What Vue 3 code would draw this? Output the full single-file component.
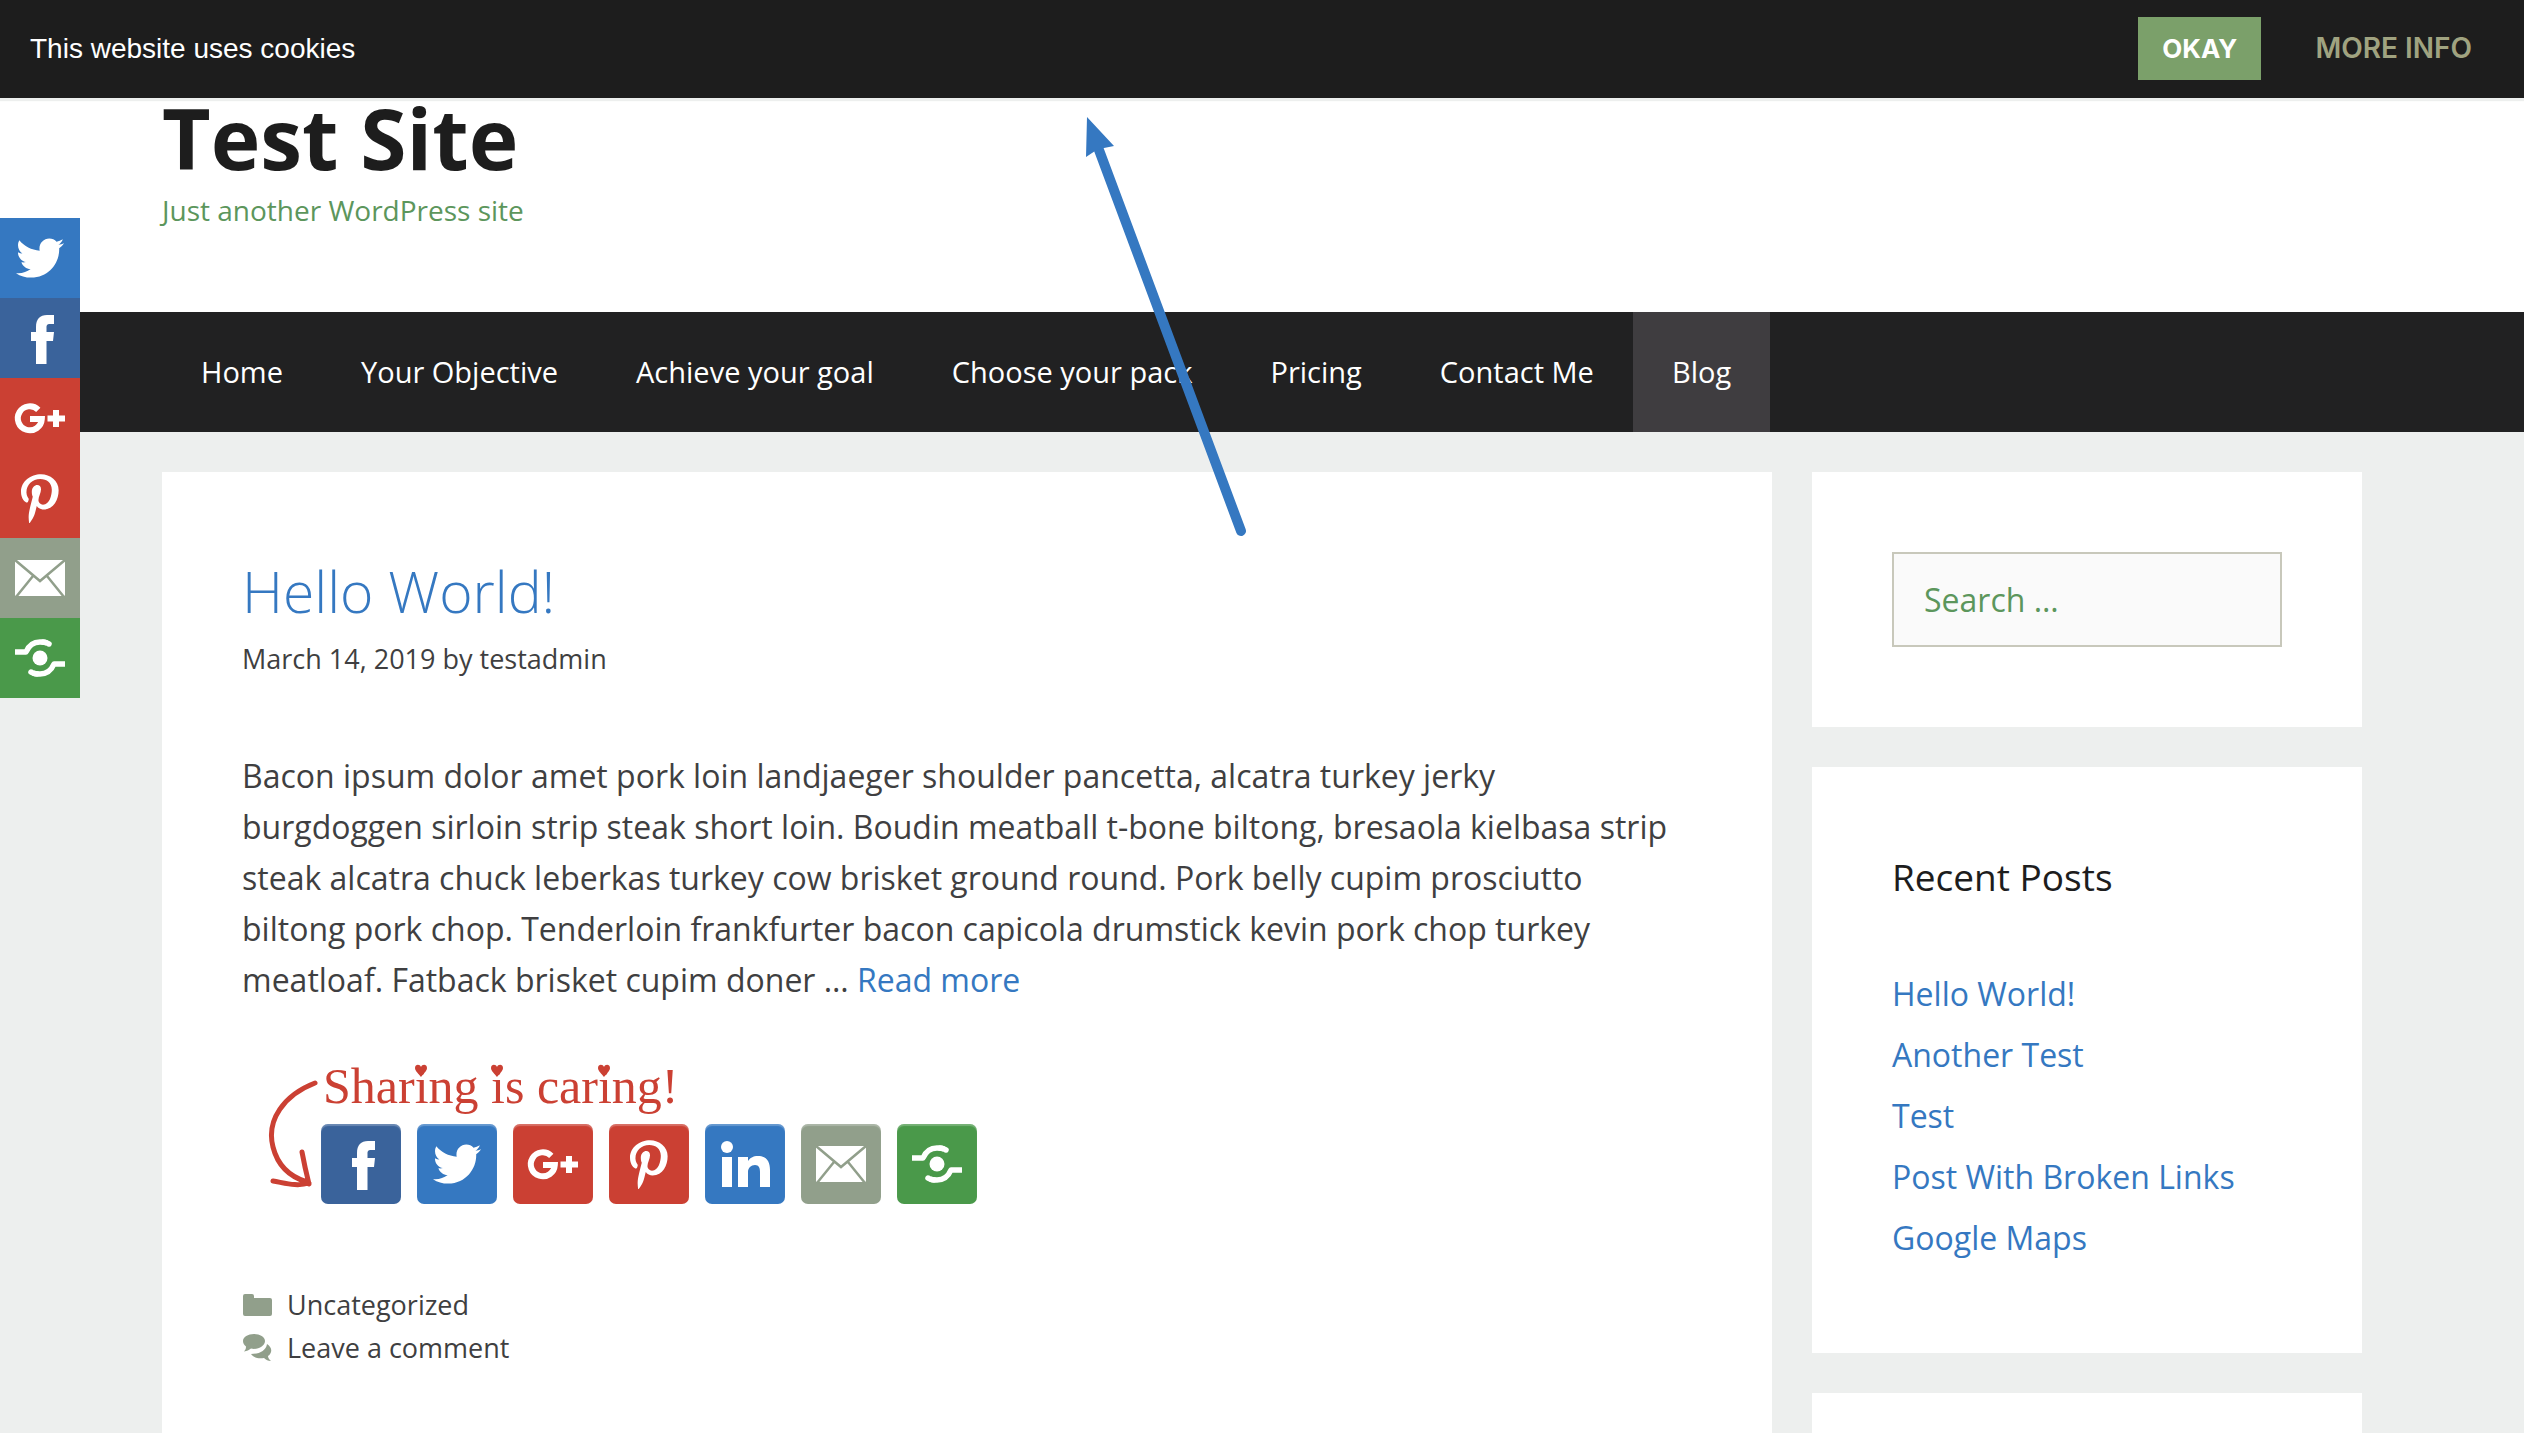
<script setup>
const nav = [
  'Home',
  'Your Objective',
  'Achieve your goal',
  'Choose your pack',
  'Pricing',
  'Contact Me',
  'Blog',
]
const floating = ['twitter', 'facebook', 'google', 'pinterest', 'email', 'share']
const inline = ['facebook', 'twitter', 'google', 'pinterest', 'linkedin', 'email', 'share']
const recent = ['Hello World!', 'Another Test', 'Test', 'Post With Broken Links', 'Google Maps']
</script>

<template>
  <div class="page">
    <svg class="sprite" aria-hidden="true">
      <symbol id="i-twitter" viewBox="0 0 80 80">
        <path
          transform="translate(16 16) scale(.094)"
          d="M459.37 151.716c.325 4.548.325 9.097.325 13.645 0 138.72-105.583 298.558-298.558 298.558-59.452 0-114.68-17.219-161.137-47.106 8.447.974 16.568 1.299 25.34 1.299 49.055 0 94.213-16.568 130.274-44.832-46.132-.975-84.792-31.188-98.112-72.772 6.498.974 12.995 1.624 19.818 1.624 9.421 0 18.843-1.3 27.614-3.573-48.081-9.747-84.143-51.98-84.143-102.985v-1.299c13.969 7.797 30.214 12.67 47.431 13.319-28.264-18.843-46.781-51.005-46.781-87.391 0-19.492 5.197-37.36 14.294-52.954 51.655 63.675 129.3 105.258 216.365 109.807-1.624-7.797-2.599-15.918-2.599-24.04 0-57.828 46.782-104.934 104.934-104.934 30.213 0 57.502 12.67 76.67 33.137 23.715-4.548 46.456-13.32 66.599-25.34-7.798 24.366-24.366 44.833-46.132 57.827 21.117-2.273 41.584-8.122 60.426-16.243-14.292 20.791-32.161 39.308-52.628 54.253z"
        />
      </symbol>
      <symbol id="i-facebook" viewBox="0 0 80 80">
        <path d="M36 66V43h-5v-9h5v-5c0-8 4-12 11-12h7v9h-4c-3 0-3.500 1-3.500 4v4H54l-1 9h-6.500v23z" />
      </symbol>
      <symbol id="i-google" viewBox="0 0 80 80">
        <path
          d="M38.300 31.800A12 12 0 1 0 41.800 41H30M56 32v17M47.500 40.500H65"
          fill="none"
          stroke="currentColor"
          stroke-width="6"
        />
      </symbol>
      <symbol id="i-pinterest" viewBox="0 0 80 80">
        <path
          transform="translate(21 15.500) scale(.098)"
          d="M204 6.500C101.400 6.500 0 74.900 0 185.600 0 256 39.600 296 63.600 296c9.900 0 15.600-27.600 15.600-35.400 0-9.300-23.700-29.100-23.700-67.800 0-80.400 61.200-137.400 140.400-137.400 68.100 0 118.500 38.700 118.500 109.800 0 53.100-21.300 152.700-90.300 152.700-24.900 0-46.200-18-46.200-43.800 0-37.800 26.400-74.400 26.400-113.400 0-66.200-93.900-54.200-93.900 25.800 0 16.800 2.100 35.400 9.600 50.700-13.800 59.400-42 147.900-42 209.100 0 18.900 2.700 37.500 4.500 56.400 3.400 3.800 1.700 3.400 6.900 1.500 50.400-69 48.600-82.500 71.400-172.800 12.300 23.400 44.100 36 69.300 36 106.200 0 153.900-103.500 153.900-196.800C384 71.300 298.200 6.500 204 6.500z"
        />
      </symbol>
      <symbol id="i-linkedin" viewBox="0 0 80 80">
        <circle cx="22" cy="23" r="6" />
        <path d="M17 33h10v30H17zM33 33h10v4c2-3 5-5 10-5 9 0 12 6 12 14v17H55V48c0-4-1-7-5-7s-7 3-7 7v15H33z" />
      </symbol>
      <symbol id="i-email" viewBox="0 0 80 80">
        <rect x="15" y="22" width="50" height="36" rx="1" />
        <path
          d="M15 22l25 21 25-21M16 59l17-21M64 59L47 38"
          fill="none"
          stroke="#919f8b"
          stroke-width="2.500"
        />
      </symbol>
      <symbol id="i-share" viewBox="0 0 80 80">
        <circle cx="40" cy="40" r="7.500" />
        <g fill="none" stroke="currentColor" stroke-width="5.500" stroke-linejoin="round">
          <path d="M15 34h11c3-7 8-10 14-10 3 0 5 0 7 1" />
          <path d="M65 46H54c-3 7-8 10-14 10-3 0-5 0-7-1" />
          <path d="M43 24c3 0 4 1 6 2M37 56c-3 0-4-1-6-2" stroke-linecap="round" />
        </g>
      </symbol>
    </svg>

    <div class="cookie" role="region" aria-label="Cookie notice">
      <span>This website uses cookies</span>
      <div class="cookie-actions">
        <button type="button" class="okay">Okay</button>
        <a href="#" class="more-info">More info</a>
      </div>
    </div>

    <header class="site-header">
      <div class="container">
        <h1>Test Site</h1>
        <p>Just another WordPress site</p>
      </div>
    </header>

    <nav class="main-nav">
      <ul class="container">
        <li v-for="item in nav" :key="item">
          <a href="#" :class="{ current: item === 'Blog' }">{{ item }}</a>
        </li>
      </ul>
    </nav>

    <div class="container content">
      <main class="post">
        <h2><a href="#">Hello World!</a></h2>
        <p class="meta">March 14, 2019 by <a href="#">testadmin</a></p>
        <p class="excerpt">
          Bacon ipsum dolor amet pork loin landjaeger shoulder pancetta, alcatra turkey jerky<br />
          burgdoggen sirloin strip steak short loin. Boudin meatball t-bone biltong, bresaola
          kielbasa strip steak alcatra chuck leberkas turkey cow brisket ground round. Pork belly
          cupim prosciutto<br />
          biltong pork chop. Tenderloin frankfurter bacon capicola drumstick kevin pork chop turkey
          meatloaf. Fatback brisket cupim doner … <a href="#">Read more</a>
        </p>
        <section class="sharing">
          <svg class="swoosh" viewBox="0 0 54 120" aria-hidden="true">
            <path d="M51 13C20 25 2 50 9 77c4 16 14 29 34 35M38 82c2 11 4 20 7 32M9 111c12 2 24 6 36 2" />
          </svg>
          <p class="caring">
            Sharing is caring!
            <svg class="hearts" viewBox="0 0 360 56" aria-hidden="true">
              <path
                v-for="x in [98, 174, 281]"
                :key="x"
                :transform="`translate(${x} 8)`"
                d="M0 11C-2 8-6 5-6 2c0-4 5-4 6-1 1-3 6-3 6 1 0 3-4 6-6 9z"
              />
            </svg>
          </p>
          <div class="share-row">
            <a v-for="name in inline" :key="name" href="#" :class="['tile', name]" :aria-label="name">
              <svg><use :href="'#i-' + name" /></svg>
            </a>
          </div>
        </section>
        <footer class="post-footer">
          <div>
            <svg viewBox="0 0 30 30" aria-hidden="true">
              <path d="M1 6q0-2 2-2h7q2 0 2 2v2h16q2 0 2 2v14q0 2-2 2H3q-2 0-2-2z" />
            </svg>
            <a href="#">Uncategorized</a>
          </div>
          <div>
            <svg viewBox="0 0 30 30" aria-hidden="true">
              <path d="M12 1c6 0 11 3 11 7s-5 8-11 8l-3-.500c-2 1.500-4 2.500-7 3 1.500-1.500 2-3 2-5C2 12 1 10 1 8c0-4 5-7 11-7z" />
              <path d="M25 11c6 4 5 9 1 12 0 2 1 3 3 5-3 0-5-1-7-3-5 1-10 0-13-4 8 0 15-3 16-10z" />
            </svg>
            <a href="#">Leave a comment</a>
          </div>
        </footer>
      </main>

      <aside class="sidebar">
        <form class="widget" @submit.prevent>
          <input type="search" placeholder="Search …" aria-label="Search for:" />
        </form>
        <section class="widget">
          <h3>Recent Posts</h3>
          <ul>
            <li v-for="title in recent" :key="title"><a href="#">{{ title }}</a></li>
          </ul>
        </section>
        <section class="widget"></section>
      </aside>
    </div>

    <div class="floating">
      <a v-for="name in floating" :key="name" href="#" :class="['tile', name]" :aria-label="name">
        <svg><use :href="'#i-' + name" /></svg>
      </a>
    </div>

    <svg class="pointer" viewBox="0 0 170 430" aria-hidden="true">
      <path d="M19 40L161 421" stroke="#3578c1" stroke-width="10" stroke-linecap="round" />
      <path d="M7 7L34 36 24 38 15 41 6 47z" fill="#3578c1" />
    </svg>
  </div>
</template>

<style>
body {
  margin: 0;
}
</style>

<style scoped>
.page {
  position: relative;
  height: 100vh;
  overflow: hidden;
  background: #edefee;
  color: #3f3f41;
  font-family: "Open Sans", "Noto Sans", sans-serif;
  font-size: 32px;
  line-height: 51px;
}
h1, h2, h3, p, ul {
  margin: 0;
  padding: 0;
}
ul {
  list-style: none;
}
a {
  color: #3578c1;
  text-decoration: none;
}
.sprite {
  position: absolute;
  width: 0;
  height: 0;
}
.container {
  box-sizing: border-box;
  max-width: 2200px;
  margin: 0 auto;
}

.cookie {
  position: absolute;
  z-index: 2;
  top: 0;
  left: 0;
  right: 0;
  display: flex;
  align-items: center;
  justify-content: space-between;
  height: 98px;
  padding: 0 28px 2px 30px;
  box-sizing: border-box;
  background: #1d1d1d;
  box-shadow: 0 3px 1px #edefee;
  color: #fff;
  font-family: "Liberation Sans", Arial, sans-serif;
  font-size: 28px;
}
.cookie-actions {
  display: flex;
  gap: 30px;
}
.okay,
.more-info {
  padding: 0 24px;
  border: 0;
  font: 600 28px/63px Inter, sans-serif;
  text-transform: uppercase;
}
.okay {
  background: #7ba06a;
  color: #fff;
  font-size: 26px;
  font-weight: 700;
}
.more-info {
  color: #a0a380;
}

.site-header {
  padding: 87px 0 81px;
  background: #fff;
}
h1 {
  color: #1d1d1d;
  font-size: 84px;
  line-height: 102px;
}
.site-header p {
  color: #5c965c;
  font-size: 28px;
  line-height: 42px;
}

.main-nav {
  background: #212122;
}
.main-nav ul {
  display: flex;
}
.main-nav a {
  display: block;
  padding: 0 39px;
  color: #fff;
  font-size: 29px;
  line-height: 120px;
}
.main-nav .current {
  background: #3f3d40;
}

.content {
  display: flex;
  align-items: flex-start;
  gap: 40px;
  padding-top: 40px;
}
.post {
  flex: 1;
  padding: 80px;
  background: #fff;
}
h2 {
  margin-bottom: 8px;
  font-size: 57px;
  font-weight: 300;
  line-height: 78px;
}
.meta {
  margin-bottom: 70px;
  font-size: 27px;
  line-height: 42px;
}
.meta a,
.post-footer a {
  color: inherit;
}
.sharing {
  position: relative;
  margin-top: 53px;
  padding-left: 79px;
}
.swoosh {
  position: absolute;
  left: 22px;
  top: 12px;
  width: 54px;
  height: 120px;
  fill: none;
  stroke: #cb4033;
  stroke-width: 5;
  stroke-linecap: round;
}
.caring {
  position: relative;
  margin: 0 0 10px 2px;
  color: #cb4033;
  font-family: "Liberation Serif", serif;
  font-size: 50px;
  line-height: 56px;
}
.hearts {
  position: absolute;
  left: 0;
  top: 0;
  width: 360px;
  height: 56px;
  fill: currentColor;
}
.share-row {
  display: flex;
  gap: 16px;
}
.tile {
  display: block;
  width: 80px;
  height: 80px;
  color: #fff;
  fill: currentColor;
}
.tile svg {
  display: block;
  width: 80px;
  height: 80px;
}
.share-row .tile {
  border-radius: 7px;
  box-shadow: inset 0 2px 1px rgba(255, 255, 255, 0.25);
}
.twitter,
.linkedin {
  background: #3578c1;
}
.facebook {
  background: #3a639b;
}
.google,
.pinterest {
  background: #cb4033;
}
.email {
  background: #919f8b;
}
.share {
  background: #4a994a;
}
.post-footer {
  margin-top: 79px;
  font-size: 27px;
  line-height: 43px;
}
.post-footer div {
  display: flex;
  align-items: center;
  gap: 15px;
}
.post-footer svg {
  width: 30px;
  height: 30px;
  fill: #919f8b;
}

.sidebar {
  display: flex;
  flex-direction: column;
  gap: 40px;
  width: 25%;
}
.widget {
  padding: 80px;
  background: #fff;
}
input {
  display: block;
  box-sizing: border-box;
  width: 100%;
  height: 95px;
  padding: 0 30px;
  border: 2px solid #c8c8bb;
  border-radius: 0;
  background: #fafafa;
  font: inherit;
}
input::placeholder {
  color: #5c965c;
  opacity: 1;
}
h3 {
  margin-bottom: 61px;
  color: #1d1d1d;
  font-size: 37px;
  font-weight: 400;
  line-height: 60px;
}
.widget li {
  margin-bottom: 10px;
}

.floating {
  position: absolute;
  left: 0;
  top: 218px;
}
.pointer {
  position: absolute;
  left: 1080px;
  top: 110px;
  width: 170px;
  height: 430px;
}
</style>
